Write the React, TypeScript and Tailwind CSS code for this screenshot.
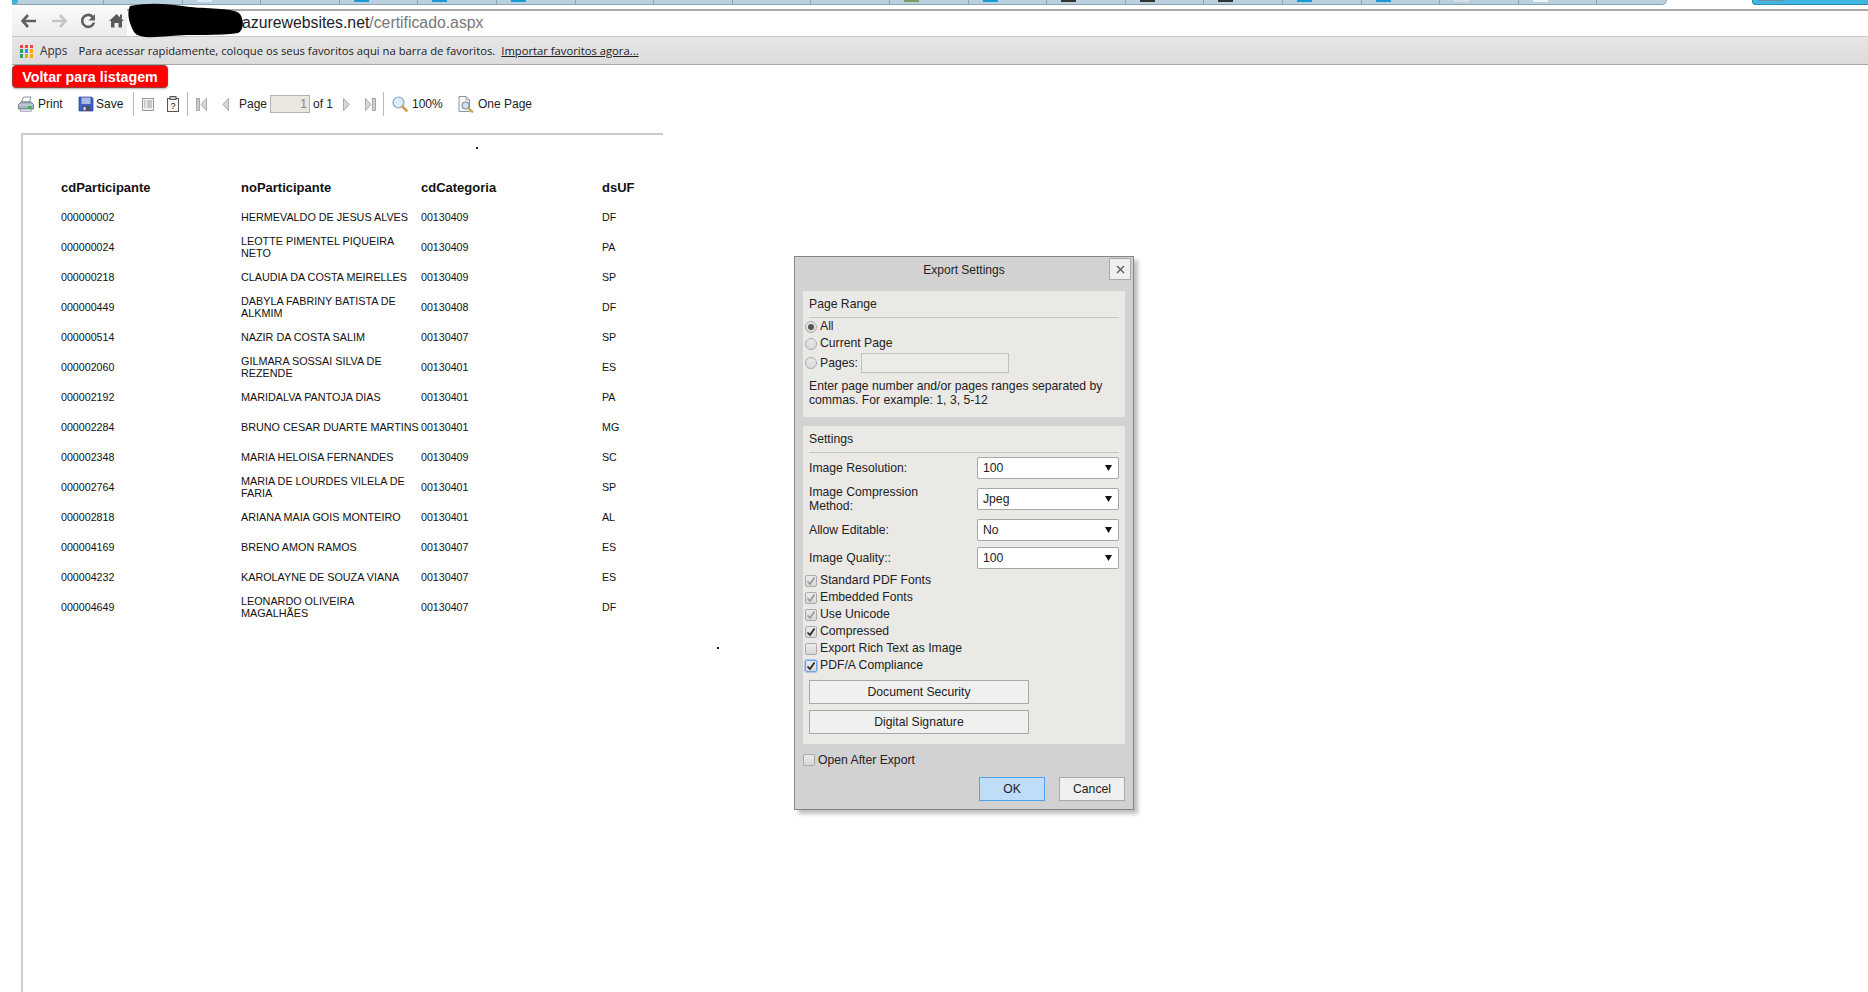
import React from "react";

const rows: [string, string, string, string][] = [
  ["000000002", "HERMEVALDO DE JESUS ALVES", "00130409", "DF"],
  ["000000024", "LEOTTE PIMENTEL PIQUEIRA NETO", "00130409", "PA"],
  ["000000218", "CLAUDIA DA COSTA MEIRELLES", "00130409", "SP"],
  ["000000449", "DABYLA FABRINY BATISTA DE ALKMIM", "00130408", "DF"],
  ["000000514", "NAZIR DA COSTA SALIM", "00130407", "SP"],
  ["000002060", "GILMARA SOSSAI SILVA DE REZENDE", "00130401", "ES"],
  ["000002192", "MARIDALVA PANTOJA DIAS", "00130401", "PA"],
  ["000002284", "BRUNO CESAR DUARTE MARTINS", "00130401", "MG"],
  ["000002348", "MARIA HELOISA FERNANDES", "00130409", "SC"],
  ["000002764", "MARIA DE LOURDES VILELA DE FARIA", "00130401", "SP"],
  ["000002818", "ARIANA MAIA GOIS MONTEIRO", "00130401", "AL"],
  ["000004169", "BRENO AMON RAMOS", "00130407", "ES"],
  ["000004232", "KAROLAYNE DE SOUZA VIANA", "00130407", "ES"],
  ["000004649", "LEONARDO OLIVEIRA MAGALHÃES", "00130407", "DF"],
];

const tabFavicons: Record<number, string> = {
  2: "#dfe8ee",
  4: "#1c9ad6",
  5: "#1c9ad6",
  6: "#1c9ad6",
  11: "#7d9a6a",
  12: "#1c9ad6",
  13: "#333333",
  14: "#333333",
  15: "#333333",
  16: "#1c9ad6",
  17: "#1c9ad6",
  18: "#d5dfe6",
  19: "#eef3f6",
};

function Tabs() {
  const n = Array.from({ length: 19 }, (_, i) => i);
  return (
    <div className="flex h-[5px] shrink-0">
      <div className="relative w-[92px] bg-[#b9d0de] border-b border-r border-[#8ea3b0] overflow-hidden">
        <div className="absolute left-0 top-0 w-[6px] h-[4px] bg-[#3fb0dc] rounded-br-[3px]" />
      </div>
      {n.map((i) => (
        <div key={i} className="relative w-[78.6px] bg-[#b9d0de] border-b border-r border-[#8ea3b0]">
          {tabFavicons[i + 1] ? (
            <div className="absolute left-[14px] top-0 w-[15px] h-[1.5px]" style={{ background: tabFavicons[i + 1] }} />
          ) : null}
        </div>
      ))}
      <div className="w-[70px] bg-[#b9d0de] border-b border-r border-[#8ea3b0] rounded-br-[5px]" />
      <div className="flex-1" />
      <div className="relative w-[116px] bg-[#3fb5e0] border-b border-l border-[#2a8bb0] rounded-bl-[4px]">
        <div className="absolute left-[6px] top-0 w-[24px] h-[1px] bg-[#6d8f9e]" />
      </div>
    </div>
  );
}

function NavIcons() {
  return (
    <div className="flex items-center w-[115px] shrink-0 pl-[9px] bg-linear-to-b from-[#fbfbfb] to-[#ececec]">
      <svg width="16" height="14" viewBox="0 0 16 14" className="shrink-0">
        <path d="M7 1 L1.5 7 L7 13 M2 7 H15" fill="none" stroke="#5f5f5f" strokeWidth="2.6" />
      </svg>
      <svg width="16" height="14" viewBox="0 0 16 14" className="ml-[14px] shrink-0">
        <path d="M9 1 L14.5 7 L9 13 M14 7 H1" fill="none" stroke="#c4c4c4" strokeWidth="2.6" />
      </svg>
      <svg width="16" height="16" viewBox="0 0 16 16" className="ml-[13px] shrink-0">
        <path d="M13 4.2 A6 6 0 1 0 14 9.5" fill="none" stroke="#5f5f5f" strokeWidth="2.6" />
        <path d="M15 1 V7.5 H8.5 Z" fill="#5f5f5f" />
      </svg>
      <svg width="15" height="15" viewBox="0 0 15 15" className="ml-[13px] shrink-0">
        <path d="M7.5 1 L15 8 H13 V14.5 H9.5 V10 H5.5 V14.5 H2 V8 H0 Z" fill="#5a5a5a" />
        <rect x="11" y="1.5" width="2" height="4" fill="#5a5a5a" />
      </svg>
    </div>
  );
}

function Scribble() {
  return (
    <svg width="125" height="38" viewBox="0 0 125 38" className="absolute left-[124px] top-[2px]">
      <path
        d="M6 4 C26 0 46 2 66 5 C86 7 111 6 116 12 C121 20 119 29 114 31 C96 34 66 32 46 34 C26 36 14 36 10 30 C6 23 2 12 6 4 Z"
        fill="#000"
      />
    </svg>
  );
}

function AppsGrid() {
  const c = ["#e8453c", "#e8453c", "#e8453c", "#2f9e5b", "#2f8fe8", "#f4a800", "#2f9e5b", "#f4a800", "#f4a800"];
  return (
    <div className="grid grid-cols-3 gap-[1.5px] w-[13px] h-[13px] shrink-0">
      {c.map((x, i) => (
        <div key={i} style={{ background: x }} />
      ))}
    </div>
  );
}

function Sep() {
  return <div className="w-[1px] h-[24px] bg-[#b8b8b8] shrink-0" />;
}

function ToolbarText({ cls, children }: { cls: string; children: React.ReactNode }) {
  return <span className={`shrink-0 text-[12px] text-[#222] whitespace-nowrap ${cls}`}>{children}</span>;
}

function Toolbar() {
  return (
    <div className="flex items-center h-[24px] mt-[4px] pl-[6px] shrink-0">
      <svg width="16" height="16" viewBox="0 0 16 16" className="shrink-0">
        <path d="M5.5 1 H13 L11.5 6 H3.5 Z" fill="#f7f9fb" stroke="#6f7d8b" strokeWidth="0.8" />
        <path d="M3 6 H13 L15.5 8.5 V13 H0.5 V8.5 Z" fill="#a5b4c2" stroke="#5f6e7c" strokeWidth="0.8" />
        <path d="M1 9 H15" stroke="#d5dde4" strokeWidth="0.9" />
        <rect x="2.5" y="13" width="11" height="2.2" fill="#e6eaee" stroke="#6f7d8b" strokeWidth="0.6" />
        <rect x="10" y="10" width="3.4" height="2.4" fill="#22c02e" />
      </svg>
      <ToolbarText cls="ml-[4px] w-[25px]">Print</ToolbarText>
      <svg width="16" height="16" viewBox="0 0 16 16" className="ml-[15px] shrink-0">
        <path d="M1 1 H13.5 L15 2.5 V15 H1 Z" fill="#3f5fc4" stroke="#2a418f" strokeWidth="0.7" />
        <rect x="3.5" y="1.5" width="9" height="6.5" fill="#aab9e6" />
        <rect x="4.5" y="10" width="7.5" height="5" fill="#4b4f63" />
        <rect x="5.5" y="11" width="2.2" height="3.2" fill="#d5d8e2" />
      </svg>
      <ToolbarText cls="ml-[2px] w-[27px]">Save</ToolbarText>
      <div className="ml-[10px]"><Sep /></div>
      <svg width="12" height="13" viewBox="0 0 12 13" className="ml-[8px] shrink-0">
        <rect x="0.5" y="0.5" width="11" height="12" fill="#f1f1f1" stroke="#9a9a9a" />
        <path d="M2 3 H3.5 M2 5 H3.5 M2 7 H3.5 M2 9 H3.5 M5 3 H10 M5 5 H10 M5 7 H10 M5 9 H10" stroke="#9a9a9a" strokeWidth="1" />
      </svg>
      <svg width="12" height="16" viewBox="0 0 12 16" className="ml-[13px] shrink-0">
        <rect x="0.5" y="2.5" width="11" height="13" fill="#f8f8f8" stroke="#555" />
        <rect x="3" y="0.5" width="6" height="3" fill="#ccc" stroke="#555" />
        <text x="6" y="13" textAnchor="middle" fontSize="9" fontFamily="Liberation Sans" fill="#222">?</text>
      </svg>
      <div className="ml-[8px]"><Sep /></div>
      <svg width="11" height="13" viewBox="0 0 11 13" className="ml-[8px] shrink-0">
        <rect x="0.5" y="0.5" width="3" height="12" fill="#ccc" stroke="#999" strokeWidth="0.8" />
        <path d="M10.5 0.5 L5 6.5 L10.5 12.5 Z" fill="#d8d8d8" stroke="#999" strokeWidth="0.8" />
      </svg>
      <svg width="7" height="13" viewBox="0 0 7 13" className="ml-[15px] shrink-0">
        <path d="M6.5 0.5 L0.8 6.5 L6.5 12.5 Z" fill="#d8d8d8" stroke="#999" strokeWidth="0.8" />
      </svg>
      <ToolbarText cls="ml-[10px] w-[29px]">Page</ToolbarText>
      <div className="ml-[2px] w-[40px] h-[18px] shrink-0 bg-[#e9e7df] border border-[#b4b4b4] flex items-center justify-end pr-[2px] text-[12px] text-[#888]">1</div>
      <ToolbarText cls="ml-[3px] w-[19px]">of 1</ToolbarText>
      <svg width="7" height="13" viewBox="0 0 7 13" className="ml-[11px] shrink-0">
        <path d="M0.5 0.5 L6.2 6.5 L0.5 12.5 Z" fill="#d8d8d8" stroke="#999" strokeWidth="0.8" />
      </svg>
      <svg width="11" height="13" viewBox="0 0 11 13" className="ml-[15px] shrink-0">
        <path d="M0.5 0.5 L6 6.5 L0.5 12.5 Z" fill="#d8d8d8" stroke="#999" strokeWidth="0.8" />
        <rect x="7.5" y="0.5" width="3" height="12" fill="#ccc" stroke="#999" strokeWidth="0.8" />
      </svg>
      <div className="ml-[7px]"><Sep /></div>
      <svg width="16" height="16" viewBox="0 0 16 16" className="ml-[8px] shrink-0">
        <circle cx="6.5" cy="6.5" r="5.5" fill="#dcebf8" stroke="#8ba0b4" strokeWidth="1.2" />
        <path d="M10.5 10.5 L14.5 14.5" stroke="#c9a24a" strokeWidth="2.6" strokeLinecap="round" />
      </svg>
      <ToolbarText cls="ml-[4px] w-[30px]">100%</ToolbarText>
      <svg width="16" height="17" viewBox="0 0 16 17" className="ml-[16px] shrink-0">
        <path d="M1 0.5 H8 L11.5 4 V15.5 H1 Z" fill="#fbfbfb" stroke="#7d8a9a" strokeWidth="0.9" />
        <path d="M8 0.5 V4 H11.5" fill="none" stroke="#7d8a9a" strokeWidth="0.8" />
        <circle cx="7.5" cy="9.5" r="3.6" fill="#cfe2f4" stroke="#6f7f90" strokeWidth="1" />
        <path d="M10.2 12.2 L14.2 15.6" stroke="#c9a24a" strokeWidth="2.4" strokeLinecap="round" />
      </svg>
      <ToolbarText cls="ml-[4px]">One Page</ToolbarText>
    </div>
  );
}

function ReportPage() {
  const h = "text-[13px] font-bold text-[#111] flex items-center h-[29px]";
  const c = "text-[10.67px] leading-[12px] text-[#111] flex items-center h-[30px]";
  const n = "text-[10.8px] leading-[12px] text-[#111] flex items-center h-[30px]";
  return (
    <div className="flex-1 ml-[9px] w-[642px] border-l-[2px] border-t-[2px] border-[#cbcbcb] pl-[38px] pt-[38px]">
      <div className="grid grid-cols-[180px_180px_181px_60px]">
        <div className={h}>cdParticipante</div>
        <div className={h}>noParticipante</div>
        <div className={h}>cdCategoria</div>
        <div className={h}>dsUF</div>
        {rows.map((r) => (
          <React.Fragment key={r[0]}>
            <div className={c}>{r[0]}</div>
            <div className={n}>{r[1]}</div>
            <div className={c}>{r[2]}</div>
            <div className={c}>{r[3]}</div>
          </React.Fragment>
        ))}
      </div>
    </div>
  );
}

function Radio({ on }: { on?: boolean }) {
  return (
    <span className="w-[12px] h-[12px] shrink-0 rounded-full border border-[#aaaaaa] bg-linear-to-b from-[#e8e8e8] to-[#dadada] flex items-center justify-center">
      {on ? <span className="w-[6px] h-[6px] rounded-full bg-[#555]" /> : null}
    </span>
  );
}

function Check({ state }: { state: "disabled" | "on" | "off" | "focus" }) {
  const ring = state === "focus" ? "border-[#6f9fe8] shadow-[0_0_0_1px_#a9c6f0]" : "border-[#aaaaaa]";
  return (
    <span className={`w-[12px] h-[12px] shrink-0 rounded-[2px] border bg-linear-to-b from-[#ebebeb] to-[#d8d8d8] flex items-center justify-center ${ring}`}>
      {state !== "off" ? (
        <svg width="10" height="10" viewBox="0 0 10 10">
          <path d="M1.5 5.5 L4 8 L8.5 1.5" fill="none" stroke={state === "disabled" ? "#999" : "#222"} strokeWidth="1.7" />
        </svg>
      ) : null}
    </span>
  );
}

function Select({ v }: { v: string }) {
  return (
    <div className="w-[142px] h-[22px] shrink-0 ml-auto bg-white border border-[#a8a8a8] rounded-[2px] flex items-center pl-[5px] pr-[6px] justify-between">
      <span>{v}</span>
      <svg width="7" height="6" viewBox="0 0 7 6"><path d="M0 0 H7 L3.5 6 Z" fill="#111" /></svg>
    </div>
  );
}

function Dialog() {
  const checks: [string, "disabled" | "on" | "off" | "focus"][] = [
    ["Standard PDF Fonts", "disabled"],
    ["Embedded Fonts", "disabled"],
    ["Use Unicode", "disabled"],
    ["Compressed", "on"],
    ["Export Rich Text as Image", "off"],
    ["PDF/A Compliance", "focus"],
  ];
  return (
    <div className="absolute left-[794px] top-[256px] w-[340px] h-[554px] bg-[#d2d2d2] border border-[#858585] shadow-[4px_4px_4px_rgba(0,0,0,0.25)] text-[12.2px] text-[#222] flex flex-col">
      <div className="relative h-[34px] shrink-0 flex items-center justify-center pb-[8px] text-[12px]">
        Export Settings
        <button className="absolute right-[2px] top-[1px] w-[22px] h-[22px] bg-[#efefef] border border-[#a8a8a8] flex items-center justify-center">
          <svg width="9" height="9" viewBox="0 0 9 9"><path d="M1 1 L8 8 M8 1 L1 8" stroke="#555" strokeWidth="1.2" /></svg>
        </button>
      </div>
      <div className="mx-[8px] h-[126px] shrink-0 bg-[#ebe9e6] px-[6px]">
        <div className="h-[27px] border-b border-[#c4c4c4] flex items-center">Page Range</div>
        <div className="flex items-center gap-[3px] h-[17px] -ml-[4px]"><Radio on />All</div>
        <div className="flex items-center gap-[3px] h-[17px] -ml-[4px]"><Radio />Current Page</div>
        <div className="flex items-center gap-[3px] h-[20px] mt-[1px] -ml-[4px]">
          <Radio />Pages:
          <div className="w-[148px] h-[20px] bg-[#ecebe5] border border-[#c0c0c0]" />
        </div>
        <p className="mt-[6px] leading-[14px]">Enter page number and/or pages ranges separated by commas. For example: 1, 3, 5-12</p>
      </div>
      <div className="mx-[8px] mt-[9px] h-[318px] shrink-0 bg-[#ebe9e6] px-[6px]">
        <div className="h-[27px] border-b border-[#c4c4c4] flex items-center">Settings</div>
        <div className="flex items-center h-[22px] mt-[4px]">Image Resolution:<Select v="100" /></div>
        <div className="flex items-center h-[22px] mt-[9px]"><span className="w-[130px] leading-[14px]">Image Compression Method:</span><Select v="Jpeg" /></div>
        <div className="flex items-center h-[22px] mt-[9px]">Allow Editable:<Select v="No" /></div>
        <div className="flex items-center h-[22px] mt-[6px]">Image Quality::<Select v="100" /></div>
        <div className="mt-[3px] -ml-[4px]">
          {checks.map(([t, s]) => (
            <div key={t} className="flex items-center gap-[3px] h-[17px]"><Check state={s} />{t}</div>
          ))}
        </div>
        <button className="block w-[220px] h-[24px] mt-[6px] bg-[#f0f0f0] border border-[#a8a8a8] text-center">Document Security</button>
        <button className="block w-[220px] h-[24px] mt-[6px] bg-[#f0f0f0] border border-[#a8a8a8] text-center">Digital Signature</button>
      </div>
      <div className="flex items-center gap-[3px] h-[16px] mt-[8px] ml-[8px]"><Check state="off" />Open After Export</div>
      <div className="flex justify-end gap-[14px] mt-[9px] pr-[8px]">
        <button className="w-[66px] h-[24px] bg-[#bfdcf9] border border-[#4da3ee]">OK</button>
        <button className="w-[66px] h-[24px] bg-[#efefef] border border-[#a8a8a8]">Cancel</button>
      </div>
    </div>
  );
}

export default function App() {
  return (
    <div className="relative w-[1868px] h-[992px] overflow-hidden bg-white pl-[12px] flex flex-col font-['Liberation_Sans',Arial,sans-serif]">
      <Tabs />
      <div className="flex h-[31px] shrink-0">
        <NavIcons />
        <div className="flex-1 mt-[4px] bg-white border-t-[2px] border-[#a9a9a9] border-b-0 flex items-center pl-[115px] text-[15.8px] text-[#222] leading-none pb-[1px]">
          azurewebsites.net<span className="text-[#777]">/certificado.aspx</span>
        </div>
      </div>
      <div className="flex items-center h-[29px] shrink-0 pl-[8px] pt-[1px] bg-linear-to-b from-[#e6e6e6] to-[#dcdcdc] border-t border-[#c6c6c6] border-b-[1px] border-b-[#a6a6a6] text-[#222]">
        <AppsGrid />
        <span className="ml-[7px] text-[11.75px] font-['Open_Sans',sans-serif] text-[#333]">Apps</span>
        <span className="ml-[11px] text-[11.25px] font-['Open_Sans',sans-serif]">Para acessar rapidamente, coloque os seus favoritos aqui na barra de favoritos.</span>
        <span className="ml-[6px] text-[11.25px] font-['Open_Sans',sans-serif] underline">Importar favoritos agora...</span>
      </div>
      <div className="h-[23px] w-[156px] shrink-0 rounded-[4px] bg-[#ff0000] border border-[#9c3a3a] shadow-[0_1px_2px_rgba(0,0,0,0.3)] flex items-center justify-center pt-[3px] text-[14.3px] font-bold text-white">
        Voltar para listagem
      </div>
      <Toolbar />
      <div className="h-[17px] shrink-0" />
      <ReportPage />
      <Scribble />
      <div className="absolute left-[476px] top-[147px] w-[2px] h-[2px] bg-[#222]" />
      <div className="absolute left-[717px] top-[647px] w-[2px] h-[2px] bg-[#222]" />
      <Dialog />
    </div>
  );
}
